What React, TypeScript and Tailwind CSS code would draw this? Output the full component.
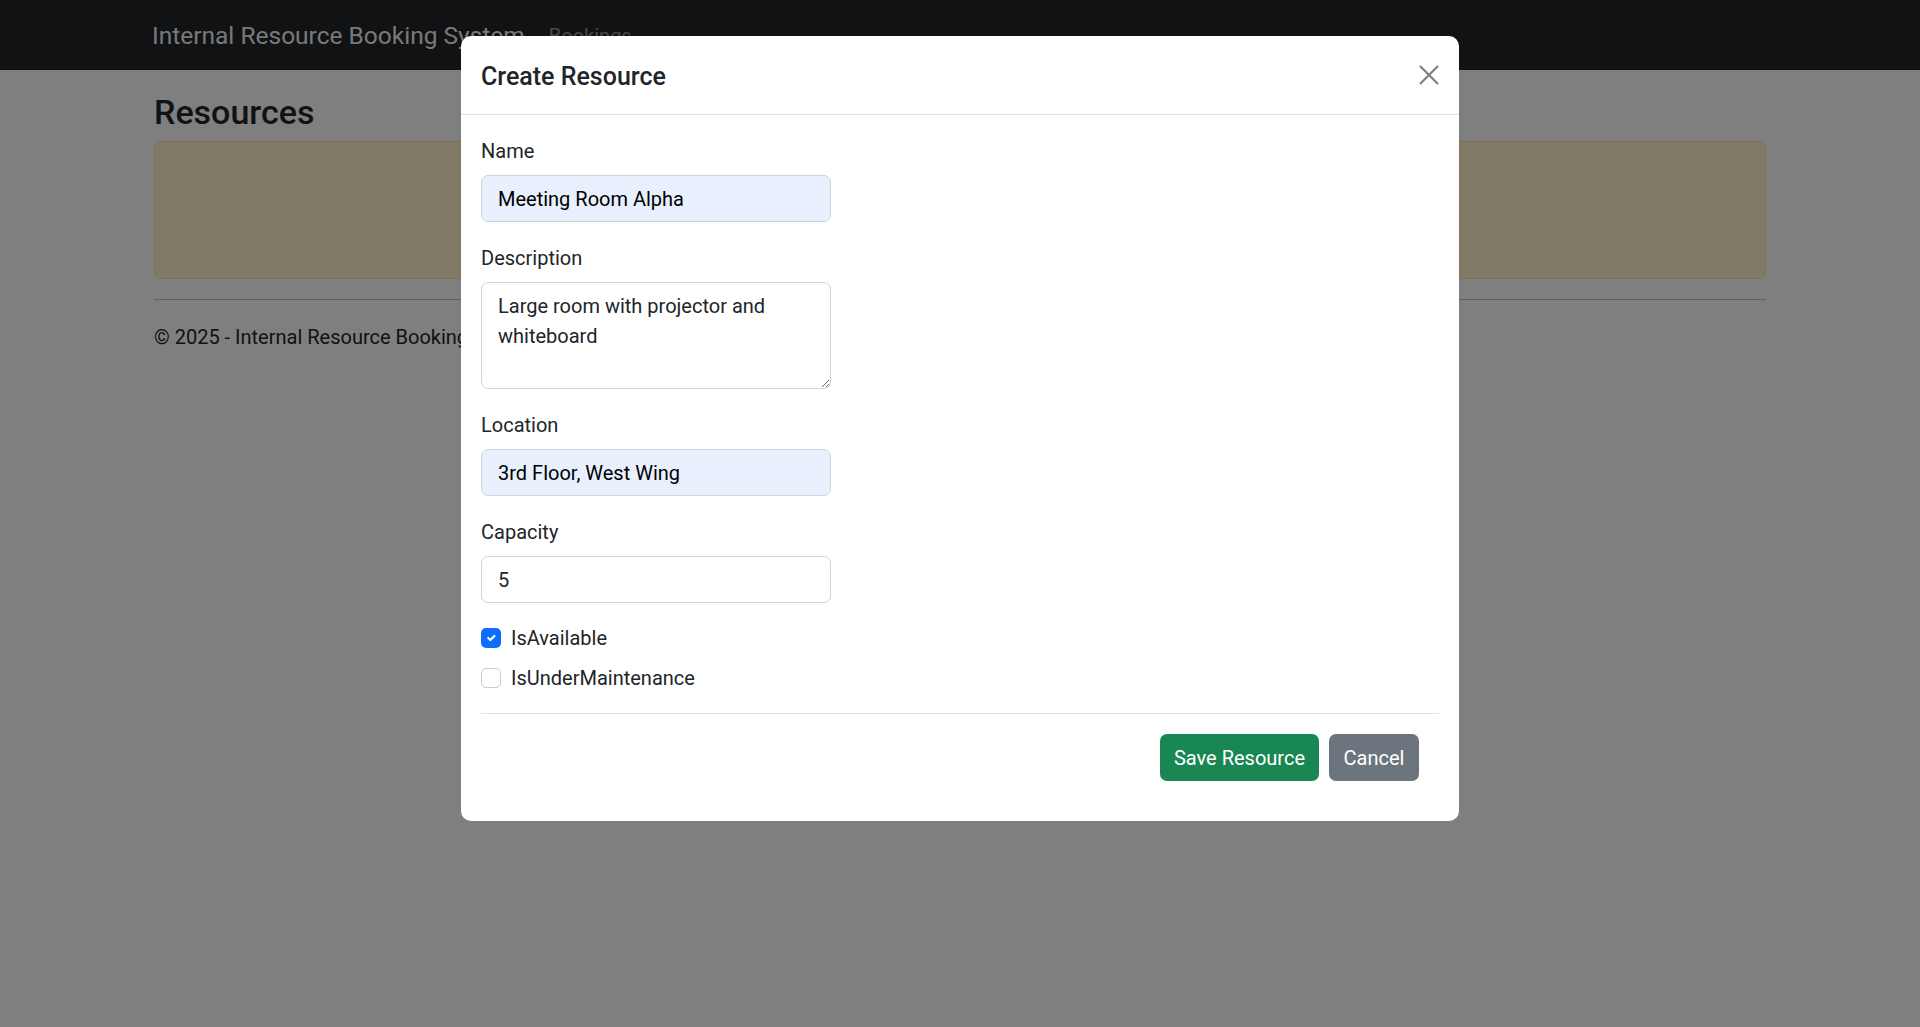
import React from 'react';

const font = { fontFamily: 'Roboto, "Noto Sans", "Liberation Sans", sans-serif' };

const Field = ({ label, children }: { label: string; children: React.ReactNode }) => (
  <div className="mb-[20px]">
    <label className="block text-[20px] leading-[30px] pt-[1px] mb-[9px] text-[#212529]">{label}</label>
    {children}
  </div>
);

const Check = ({ checked, label }: { checked: boolean; label: string }) => (
  <div className="flex items-center gap-[10px] h-[30px] mb-[10px]">
    {checked ? (
      <span className="w-[20px] h-[20px] rounded-[5px] bg-[#0d6efd] flex items-center justify-center">
        <svg width="14" height="14" viewBox="0 0 20 20" fill="none">
          <path d="M6 10l3 3 6-6" stroke="#fff" strokeWidth="3" strokeLinecap="round" strokeLinejoin="round" />
        </svg>
      </span>
    ) : (
      <span className="w-[20px] h-[20px] rounded-[5px] border border-[#c9ccd0] bg-white" />
    )}
    <span className="text-[20px] leading-[30px] text-[#212529]">{label}</span>
  </div>
);

export default function App() {
  return (
    <div className="min-h-screen bg-white relative text-[#212529]" style={font}>
      {/* page behind the modal */}
      <nav className="h-[70px] bg-[#212529] flex items-center pl-[152px] pt-[2px]">
        <span className="text-[24.5px] text-white/95 leading-none">Internal Resource Booking System</span>
        <span className="text-[20px] text-white/50 ml-[24px]">Bookings</span>
      </nav>
      <main className="px-[154px]">
        <h3 className="text-[34px] font-medium leading-[42px] mt-[21px] mb-[8px]">Resources</h3>
        <div className="h-[138px] bg-[#fff3cd] border border-[#ffe69c] rounded-[7px] mb-[20px]"></div>
        <hr className="border-t border-[#c4c4c4]" />
        <footer className="text-[20px] leading-[30px] mt-[22px]">© 2025 - Internal Resource Booking System</footer>
      </main>

      {/* backdrop + modal */}
      <div className="fixed inset-0 bg-black/50">
        <div className="w-[998px] mx-auto mt-[36px] bg-white rounded-[10px]">
          <div className="h-[79px] flex items-center justify-between px-[20px] border-b border-[#dee2e6]">
            <h5 className="text-[25px] font-medium leading-[30px] pt-[3px]">Create Resource</h5>
            <svg width="20" height="20" viewBox="0 0 20 20">
              <path d="M1 1l18 18M19 1L1 19" stroke="#7f7f7f" strokeWidth="2.2" />
            </svg>
          </div>
          <div className="p-[20px]">
            <Field label="Name">
              <input
                readOnly
                value="Meeting Room Alpha"
                className="w-[350px] h-[47px] px-[16px] text-[20px] bg-[#e8f0fe] border border-[#ced4da] rounded-[7px] text-black outline-none"
              />
            </Field>
            <Field label="Description">
              <textarea
                readOnly
                rows={3}
                defaultValue="Large room with projector and whiteboard"
                className="block w-[350px] h-[107px] px-[16px] py-[8px] text-[20px] leading-[30px] bg-white border border-[#ced4da] rounded-[7px] outline-none resize-y"
              />
            </Field>
            <Field label="Location">
              <input
                readOnly
                value="3rd Floor, West Wing"
                className="w-[350px] h-[47px] px-[16px] text-[20px] bg-[#e8f0fe] border border-[#ced4da] rounded-[7px] text-black outline-none"
              />
            </Field>
            <Field label="Capacity">
              <input
                readOnly
                value="5"
                className="w-[350px] h-[47px] px-[16px] text-[20px] bg-white border border-[#ced4da] rounded-[7px] text-[#212529] outline-none"
              />
            </Field>
            <Check checked label="IsAvailable" />
            <Check checked={false} label="IsUnderMaintenance" />
            <hr className="mt-[20px] mb-[20px] border-t border-[#dee2e6]" />
            <div className="flex justify-end gap-[10px] pr-[20px] mb-[20px]">
              <button className="w-[159px] h-[47px] rounded-[7px] bg-[#198754] text-white text-[20px]">Save Resource</button>
              <button className="w-[90px] h-[47px] rounded-[7px] bg-[#6c757d] text-white text-[20px]">Cancel</button>
            </div>
          </div>
        </div>
      </div>
    </div>
  );
}
